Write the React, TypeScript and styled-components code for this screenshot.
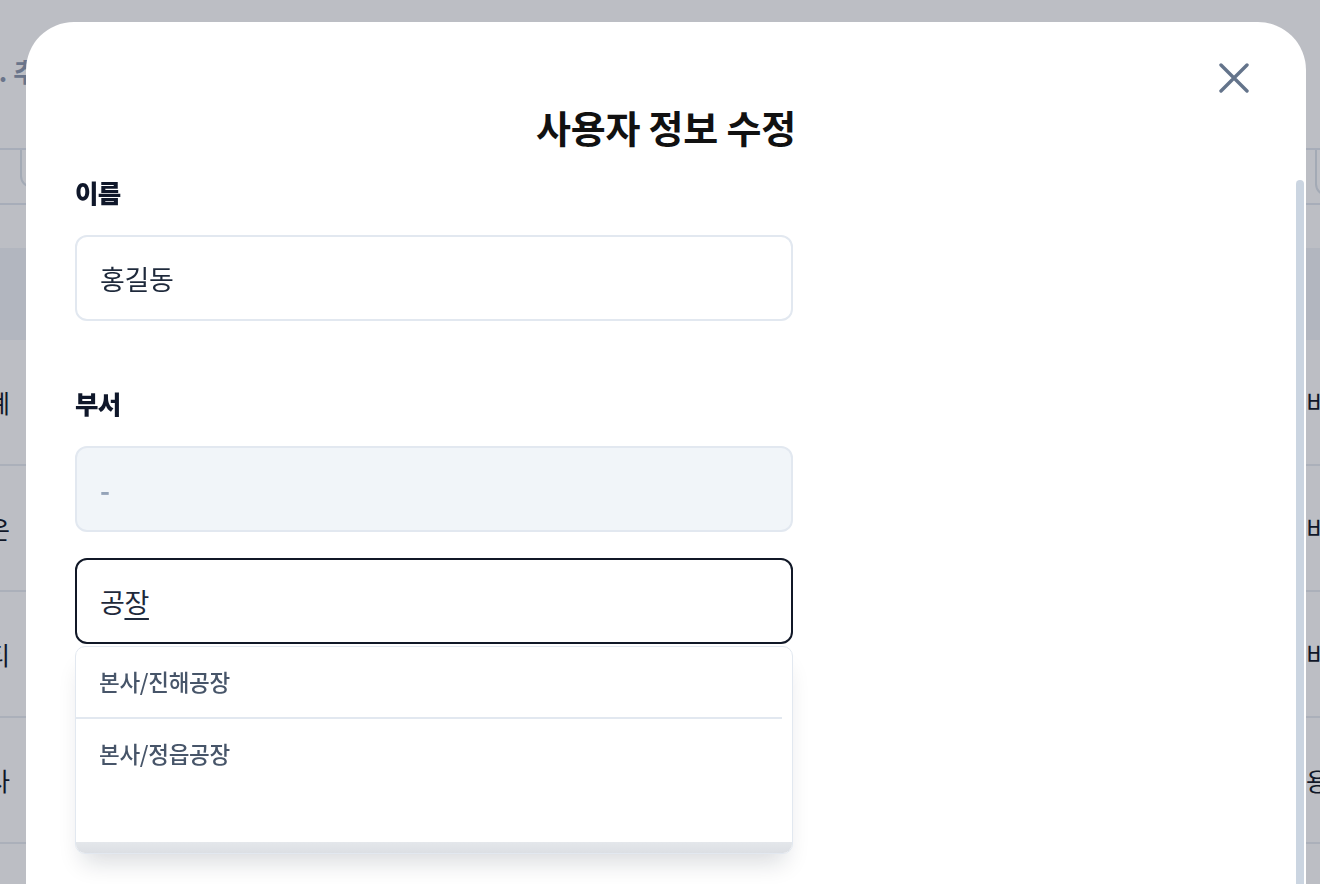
import React from "react";
import styled, { createGlobalStyle } from "styled-components";

const FONT = `"Noto Sans CJK KR", "Noto Sans", "DejaVu Sans", sans-serif`;

const GlobalStyle = createGlobalStyle`
  html, body {
    margin: 0;
    padding: 0;
    height: 100%;
    overflow: hidden;
    background: #ffffff;
  }
  body {
    font-family: ${FONT};
  }
  *, *::before, *::after {
    box-sizing: border-box;
  }
`;

/* ---------- background page (behind the dimmed overlay) ---------- */

const Page = styled.div`
  width: 1320px;
  display: flex;
  flex-direction: column;
  color: #111827;
`;

const PageTop = styled.div`
  height: 148px;
  padding-top: 50px;
`;

const Crumb = styled.div`
  width: 61px;
  height: 40px;
  display: flex;
  justify-content: flex-end;
  align-items: center;
  white-space: nowrap;
  font-size: 26px;
  font-weight: 700;
  color: #8e9ab0;
`;

const Toolbar = styled.div`
  height: 57px;
  display: flex;
  justify-content: space-between;
  align-items: flex-start;
  border-top: 2px solid #e2e8f0;
  border-bottom: 2px solid #e2e8f0;
`;

const SearchBox = styled.div`
  margin-left: 20px;
  width: 300px;
  height: 38px;
  border: 2px solid #dde3eb;
  border-top: none;
  border-radius: 0 0 12px 12px;
`;

const FilterBox = styled.div`
  flex: 0 0 200px;
  margin-right: -195px;
  height: 46px;
  border: 2px solid #dde3eb;
  border-top: none;
  border-radius: 0 0 12px 12px;
`;

const HeadGap = styled.div`
  height: 43px;
`;

const TableHead = styled.div`
  height: 92px;
  background: #f1f4f8;
`;

const Row = styled.div`
  height: 126px;
  display: grid;
  grid-template-columns: 10px 1fr 14px;
  align-items: center;
  border-bottom: 2px solid #e8ecf1;
  font-size: 25px;
  white-space: nowrap;
`;

const LeadCell = styled.div`
  display: flex;
  justify-content: flex-end;
`;

const TailCell = styled.div`
  overflow: visible;
`;

/* ---------- overlay + modal ---------- */

const Overlay = styled.div`
  position: fixed;
  inset: 0;
  background: rgba(15, 23, 42, 0.28);
  padding-top: 22px;
  display: flex;
  align-items: flex-start;
`;

const Modal = styled.div`
  position: relative;
  margin-left: 26px;
  width: 1280px;
  height: 1400px;
  background: #ffffff;
  border-radius: 48px 48px 0 0;
  display: flex;
  flex-direction: column;
`;

const Header = styled.header`
  padding: 81px 0 25px;
  text-align: center;
`;

const Title = styled.h2`
  margin: 0;
  font-size: 38px;
  line-height: 48px;
  font-weight: 700;
  color: #111111;
  letter-spacing: -0.2px;
`;

const CloseButton = styled.button`
  position: absolute;
  top: 34px;
  right: 50px;
  width: 44px;
  height: 44px;
  padding: 0;
  border: 0;
  background: transparent;
  color: #64748b;
  display: flex;
  align-items: center;
  justify-content: center;
  cursor: pointer;
`;

const ScrollThumb = styled.div`
  position: absolute;
  right: 2px;
  top: 158px;
  width: 8px;
  height: 1200px;
  border-radius: 4px;
  background: #cbd5e1;
`;

const Body = styled.div`
  flex: 1;
  overflow-y: auto;
  scrollbar-width: none;
  padding: 0 0 120px 49px;
`;

const Form = styled.form`
  width: 718px;
  display: flex;
  flex-direction: column;
`;

const Field = styled.div`
  display: flex;
  flex-direction: column;
  margin-bottom: 66px;
`;

const Label = styled.label`
  font-size: 25.5px;
  line-height: 32px;
  font-weight: 800;
  color: #0f172a;
  letter-spacing: -0.6px;
  margin-bottom: 27px;
`;

const InputStack = styled.div`
  display: flex;
  flex-direction: column;
  gap: 26px;
`;

const TextInput = styled.input`
  height: 86px;
  width: 100%;
  border: 2px solid #e2e8f0;
  border-radius: 12px;
  padding: 0 23px;
  font-family: ${FONT};
  font-size: 27px;
  letter-spacing: -0.4px;
  color: #1e293b;
  background: #ffffff;
  outline: none;

  &:disabled {
    background: #f1f5f9;
    color: #94a3b8;
    -webkit-text-fill-color: #94a3b8;
    font-weight: 600;
    opacity: 1;
  }
`;

const Combo = styled.div`
  position: relative;
`;

const ComposingBox = styled.div`
  height: 86px;
  border: 2px solid #111827;
  border-radius: 12px;
  padding: 0 23px;
  display: flex;
  align-items: center;
  font-size: 27px;
  letter-spacing: -0.4px;
  color: #1e293b;
  background: #ffffff;
`;

const Composing = styled.span`
  text-decoration: underline;
  text-decoration-thickness: 2px;
  text-underline-offset: 5px;
`;

const Dropdown = styled.div`
  position: absolute;
  top: calc(100% + 2px);
  left: 0;
  right: 0;
  z-index: 5;
  border: 1px solid #e2e8f0;
  border-radius: 10px;
  background: #ffffff;
  overflow: hidden;
  box-shadow: 0 16px 24px -8px rgba(15, 23, 42, 0.16);
`;

const OptionList = styled.ul`
  list-style: none;
  margin: 0;
  padding: 0 10px 0 0;
  height: 195px;
`;

const Option = styled.li<{ $divider?: boolean }>`
  height: ${(p) => (p.$divider ? 72 : 70)}px;
  padding: 19px 0 0 23px;
  font-size: 22.5px;
  line-height: 30px;
  font-weight: 500;
  letter-spacing: -0.3px;
  color: #475569;
  border-bottom: ${(p) => (p.$divider ? "2px solid #e2e8f0" : "none")};
`;

const ScrollStrip = styled.div`
  height: 11px;
  background: linear-gradient(#e4e7eb, #dcdfe4);
`;

const leftWords = ["재무회계", "김지은", "파티", "인사"];
const rightWords = ["비활성", "비활성", "비활성", "용인공장"];

function CloseIcon() {
  return (
    <svg width="30" height="30" viewBox="0 0 30 30" fill="none" aria-hidden="true">
      <path
        d="M2 2 L28 28 M28 2 L2 28"
        stroke="currentColor"
        strokeWidth="3.4"
        strokeLinecap="round"
      />
    </svg>
  );
}

export default function App() {
  return (
    <>
      <GlobalStyle />
      <Page>
        <PageTop>
          <Crumb>1. 추가</Crumb>
        </PageTop>
        <Toolbar>
          <SearchBox />
          <FilterBox />
        </Toolbar>
        <HeadGap />
        <TableHead />
        {leftWords.map((w, i) => (
          <Row key={i}>
            <LeadCell>{w}</LeadCell>
            <div />
            <TailCell>{rightWords[i]}</TailCell>
          </Row>
        ))}
      </Page>

      <Overlay>
        <Modal role="dialog" aria-modal="true" aria-labelledby="edit-title">
          <Header>
            <Title id="edit-title">사용자 정보 수정</Title>
          </Header>
          <CloseButton type="button" aria-label="닫기">
            <CloseIcon />
          </CloseButton>
          <ScrollThumb />
          <Body>
            <Form onSubmit={(e) => e.preventDefault()}>
              <Field>
                <Label htmlFor="name">이름</Label>
                <TextInput id="name" defaultValue="홍길동" />
              </Field>
              <Field>
                <Label htmlFor="dept">부서</Label>
                <InputStack>
                  <TextInput id="dept" value="-" disabled readOnly />
                  <Combo>
                    <ComposingBox role="combobox" aria-expanded="true">
                      공<Composing>장</Composing>
                    </ComposingBox>
                    <Dropdown role="listbox">
                      <OptionList>
                        <Option $divider role="option">본사/진해공장</Option>
                        <Option role="option">본사/정읍공장</Option>
                      </OptionList>
                      <ScrollStrip />
                    </Dropdown>
                  </Combo>
                </InputStack>
              </Field>
            </Form>
          </Body>
        </Modal>
      </Overlay>
    </>
  );
}
